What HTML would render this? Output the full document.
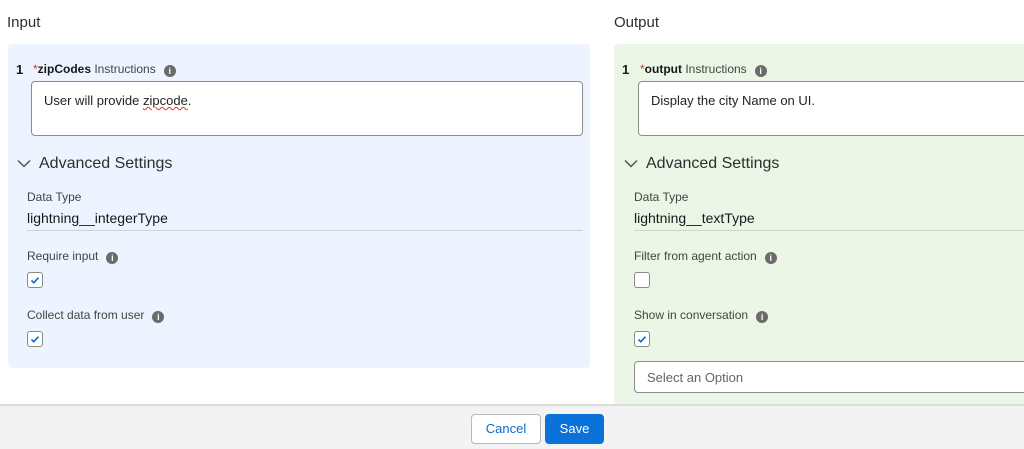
<!DOCTYPE html>
<html><head><meta charset="utf-8"><style>
*{box-sizing:border-box;margin:0;padding:0}
body{width:1024px;height:449px;overflow:hidden;background:#fff;font-family:"Liberation Sans",sans-serif;color:#181818;position:relative}
.a{position:absolute;white-space:nowrap}
.h{font-size:15px;color:#2e2e2e}
.panel{position:absolute;border-radius:4px}
.lbl{font-size:12px;color:#444}
.info{display:inline-block;width:12px;height:12px;border-radius:50%;background:#6b6b6b;color:#fff;font-size:9px;font-weight:bold;text-align:center;line-height:12px;vertical-align:-1px;margin-left:8px}
.ta{position:absolute;background:#fff;border:1px solid #8c8c8c;border-radius:4px;font-size:13px;padding:11px 12px;color:#222}
.cb{position:absolute;width:16px;height:16px;border:1px solid #8a8a8a;border-radius:3px;background:#fff}
.adv{font-size:16px;color:#2e2e2e}
.dt{font-size:14px;color:#181818}
.line{position:absolute;height:1px;background:#d0d0d0}
</style></head><body>
<div class="a h" style="left:7px;top:14px">Input</div>
<div class="a h" style="left:614px;top:14px">Output</div>

<div class="panel" style="left:8px;top:44px;width:582px;height:324px;background:#eef4ff"></div>
<div class="panel" style="left:614px;top:44px;width:420px;height:362px;background:#ebf6e6;border-radius:4px 0 0 0"></div>

<!-- left -->
<div class="a" style="left:16px;top:62px;font-size:13px;font-weight:bold">1</div>
<div class="a lbl" style="left:33px;top:62px"><span style="color:#c23934">*</span><b style="color:#181818">zipCodes</b> Instructions<span class="info">i</span></div>
<div class="ta" style="left:31px;top:81px;width:552px;height:55px">User will provide <span style="text-decoration:underline wavy #d33;text-decoration-thickness:1px">zipcode</span>.</div>
<svg class="a" style="left:17px;top:159px" width="14" height="9" viewBox="0 0 14 9"><path d="M1 1.5l6 6 6-6" stroke="#555" stroke-width="1.5" fill="none"/></svg>
<div class="a adv" style="left:39px;top:155px">Advanced Settings</div>
<div class="a lbl" style="left:27px;top:190px">Data Type</div>
<div class="a dt" style="left:27px;top:210px">lightning__integerType</div>
<div class="line" style="left:27px;top:230px;width:556px"></div>
<div class="a lbl" style="left:27px;top:249px">Require input<span class="info">i</span></div>
<div class="cb" style="left:27px;top:272px"><svg width="14" height="14" viewBox="0 0 14 14"><path d="M3.5 7.5l2.3 2.2 4.7-5" stroke="#0b6bcb" stroke-width="1.6" fill="none"/></svg></div>
<div class="a lbl" style="left:27px;top:308px">Collect data from user<span class="info">i</span></div>
<div class="cb" style="left:27px;top:331px"><svg width="14" height="14" viewBox="0 0 14 14"><path d="M3.5 7.5l2.3 2.2 4.7-5" stroke="#0b6bcb" stroke-width="1.6" fill="none"/></svg></div>

<!-- right -->
<div class="a" style="left:622px;top:62px;font-size:13px;font-weight:bold">1</div>
<div class="a lbl" style="left:640px;top:62px"><span style="color:#c23934">*</span><b style="color:#181818">output</b> Instructions<span class="info">i</span></div>
<div class="ta" style="left:638px;top:81px;width:400px;height:55px">Display the city Name on UI.</div>
<svg class="a" style="left:624px;top:159px" width="14" height="9" viewBox="0 0 14 9"><path d="M1 1.5l6 6 6-6" stroke="#555" stroke-width="1.5" fill="none"/></svg>
<div class="a adv" style="left:646px;top:155px">Advanced Settings</div>
<div class="a lbl" style="left:634px;top:190px">Data Type</div>
<div class="a dt" style="left:634px;top:210px">lightning__textType</div>
<div class="line" style="left:634px;top:230px;width:400px"></div>
<div class="a lbl" style="left:634px;top:249px">Filter from agent action<span class="info">i</span></div>
<div class="cb" style="left:634px;top:272px"></div>
<div class="a lbl" style="left:634px;top:308px">Show in conversation<span class="info">i</span></div>
<div class="cb" style="left:634px;top:331px"><svg width="14" height="14" viewBox="0 0 14 14"><path d="M3.5 7.5l2.3 2.2 4.7-5" stroke="#0b6bcb" stroke-width="1.6" fill="none"/></svg></div>
<div class="ta" style="left:634px;top:361px;width:400px;height:32px;padding:8px 12px;color:#666">Select an Option</div>

<!-- footer -->
<div style="position:absolute;left:0;top:404px;width:1024px;height:45px;background:#f3f3f3;border-top:2px solid #dcdcdc"></div>
<div class="a" style="left:471px;top:414px;width:70px;height:30px;border:1px solid #b8b8b8;border-radius:4px;background:#fff;color:#0b6bcb;font-size:13px;text-align:center;line-height:28px">Cancel</div>
<div class="a" style="left:545px;top:414px;width:59px;height:30px;border-radius:4px;background:#0b72d9;color:#fff;font-size:13px;text-align:center;line-height:30px">Save</div>
</body></html>
